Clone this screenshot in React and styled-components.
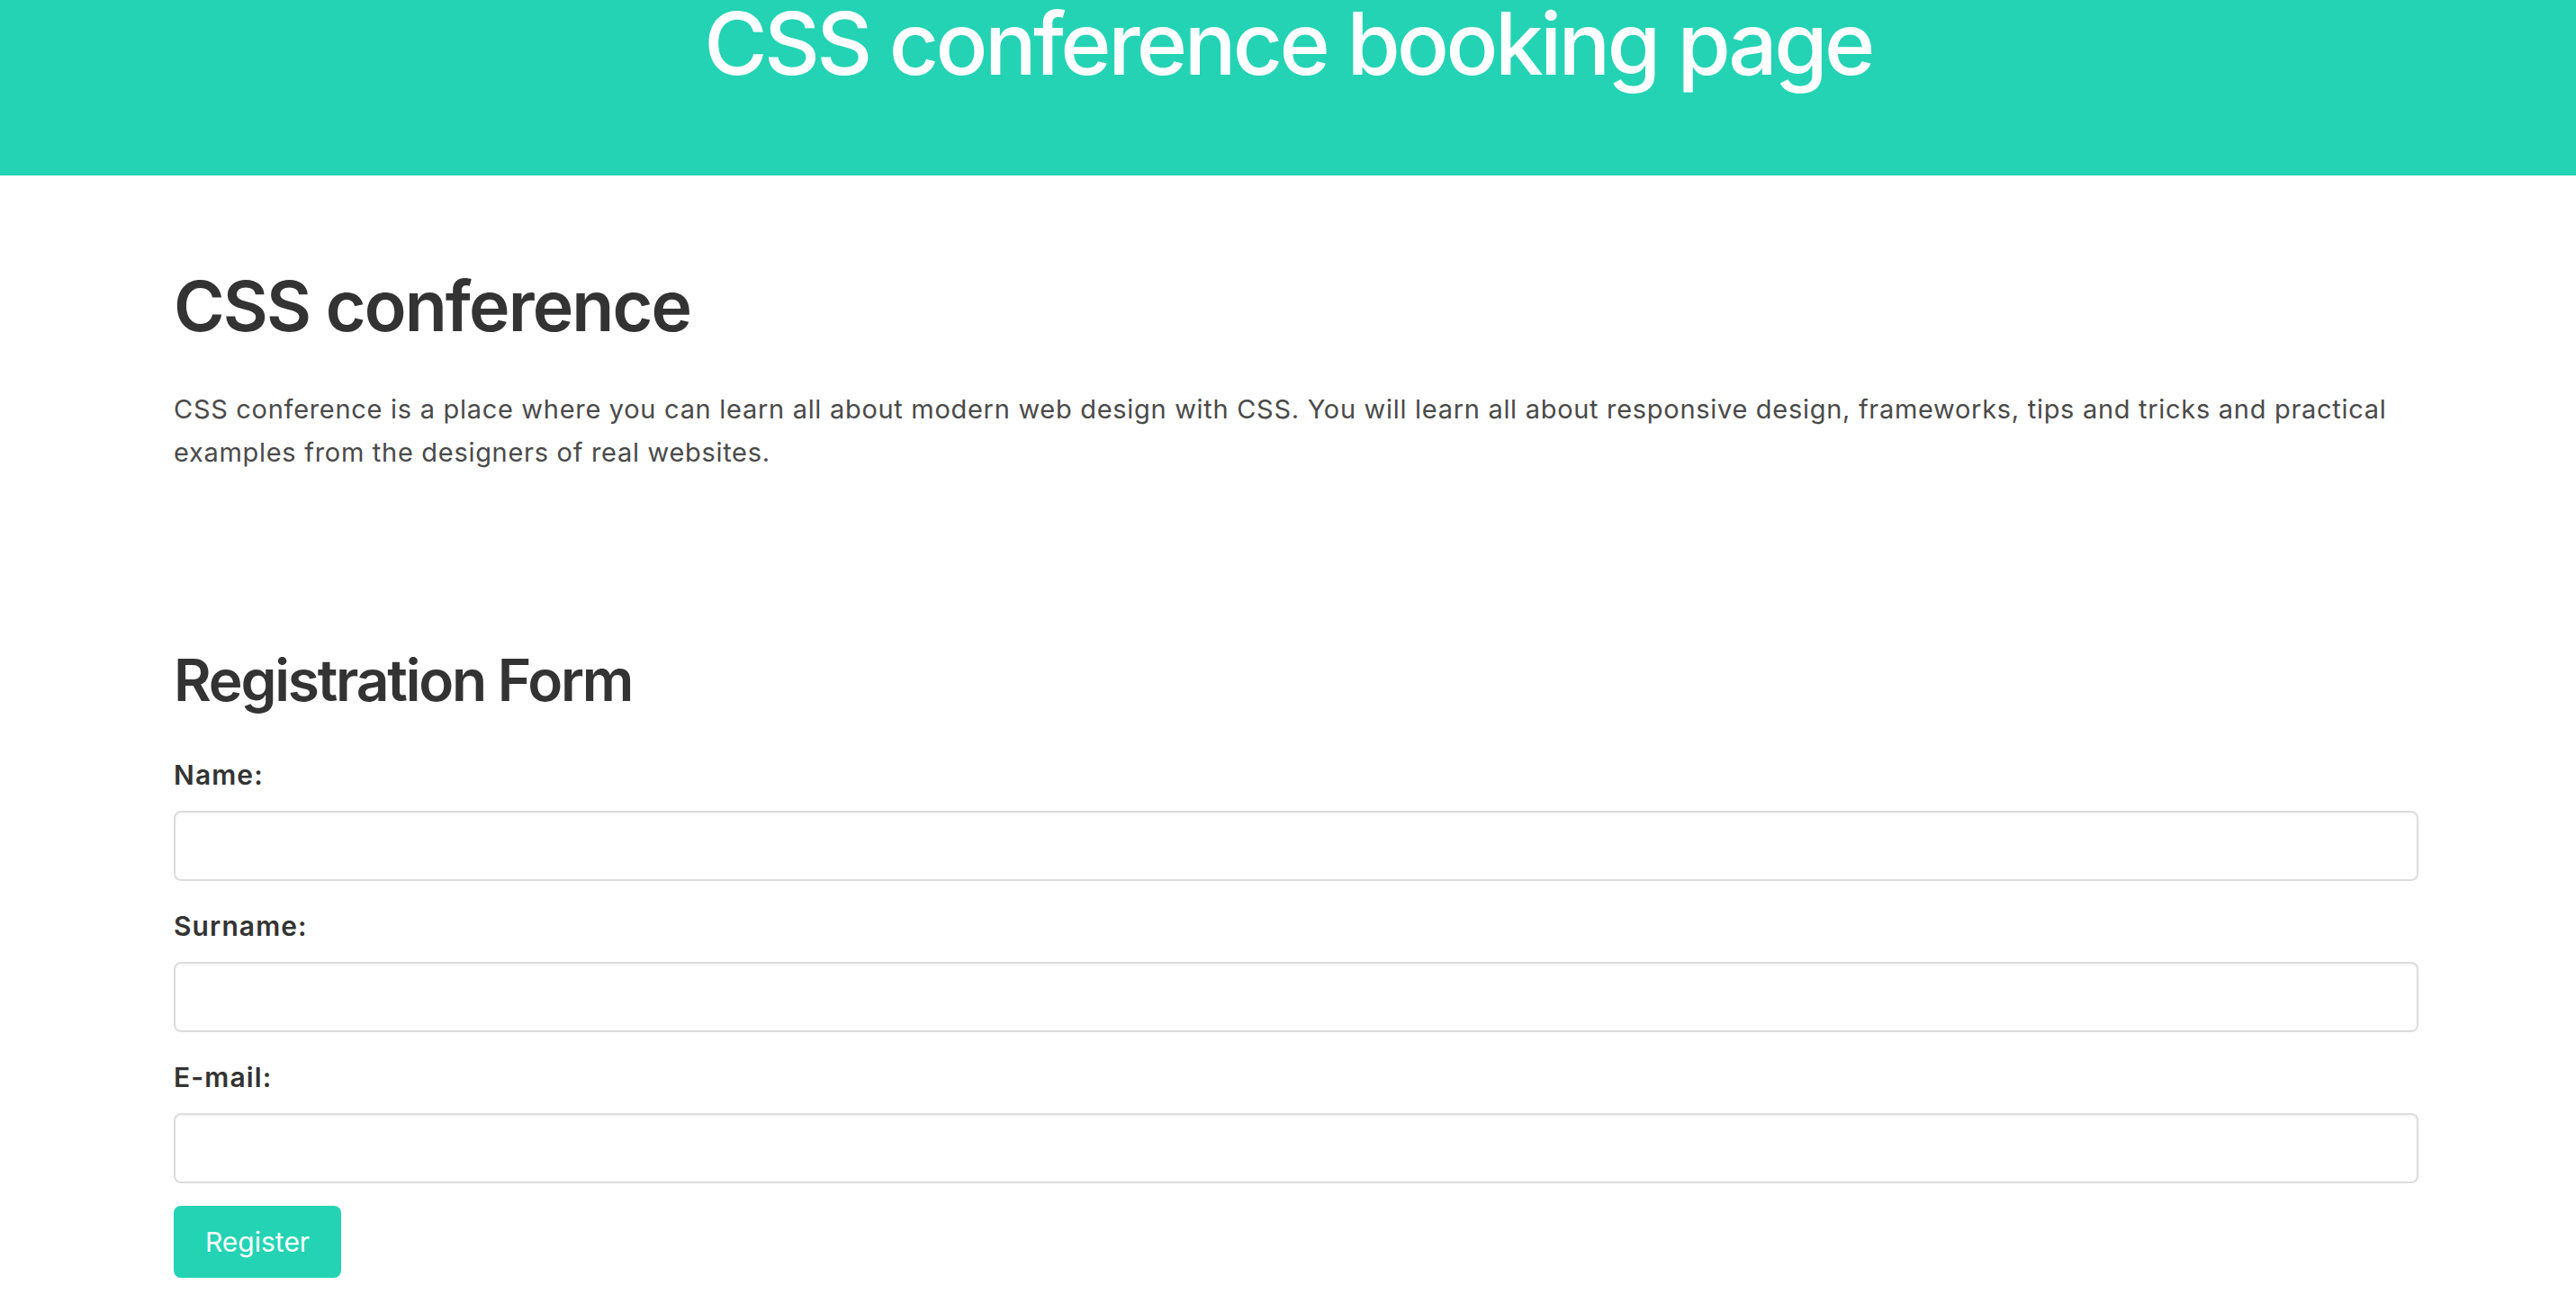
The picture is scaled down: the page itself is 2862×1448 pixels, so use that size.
import React from 'react'
import styled, { createGlobalStyle } from 'styled-components';

const GlobalStyle = createGlobalStyle`
    *{
        margin: 0;
        padding: 0;
    }
    body{
        background: #ffffff;
        font-family: Inter, "Noto Sans", "Liberation Sans", sans-serif;
        color: #333333;
    }
`;

const fields = [
    { id: 'name', label: 'Name:', type: 'text' },
    { id: 'surname', label: 'Surname:', type: 'text' },
    { id: 'email', label: 'E-mail:', type: 'email' },
]

function App() {
  return (
    <PageStyled>
        <GlobalStyle />
        <header className="banner">
            <h1>CSS conference booking page</h1>
        </header>
        <main className="content">
            <section className="intro">
                <h2>CSS conference</h2>
                <p>
                    CSS conference is a place where you can learn all about modern web design with CSS. You will learn all about responsive design, frameworks, tips and tricks and practical examples from the designers of real websites.
                </p>
            </section>
            <FormStyled onSubmit={e => e.preventDefault()}>
                <h3>Registration Form</h3>
                {fields.map(field => {
                    const {id, label, type} = field
                    return <div className="field" key={id}>
                        <label htmlFor={id}>{label}</label>
                        <input id={id} name={id} type={type} />
                    </div>
                })}
                <button type="submit">Register</button>
            </FormStyled>
        </main>
    </PageStyled>
  )
}

export default App

const PageStyled = styled.div`
    .banner{
        height: 195px;
        background: #23d3b4;
        h1{
            font-size: 96px;
            line-height: 96px;
            font-weight: 500;
            letter-spacing: -3.6px;
            color: #ffffff;
            text-align: center;
        }
    }
    .content{
        width: 2476px;
        margin: 0 auto;
    }
    .intro{
        padding-top: 99px;
        h2{
            font-size: 77px;
            line-height: 1.2;
            font-weight: 600;
            letter-spacing: -1.9px;
            color: #333333;
        }
        p{
            margin-top: 45px;
            font-size: 29px;
            line-height: 48px;
            letter-spacing: 0.7px;
            color: #4a4a4a;
        }
    }
`;

const FormStyled = styled.form`
    display: flex;
    flex-direction: column;
    align-items: flex-start;
    padding-top: 191px;
    padding-bottom: 26px;
    h3{
        font-size: 64px;
        line-height: 1.2;
        font-weight: 600;
        letter-spacing: -2.2px;
        color: #333333;
    }
    .field{
        align-self: stretch;
        display: flex;
        flex-direction: column;
        padding-top: 48px;
        &:not(:first-of-type){
            padding-top: 32px;
        }
    }
    label{
        font-size: 30px;
        line-height: 36px;
        font-weight: 600;
        letter-spacing: 1.1px;
        color: #333333;
    }
    input{
        box-sizing: content-box;
        width: 100%;
        height: 74px;
        margin-top: 22px;
        padding: 0 7px;
        border: 2px solid #dcdcdc;
        border-radius: 8px;
        box-shadow: inset 0 2px 3px rgba(0, 0, 0, 0.04);
        font-size: 28px;
        font-family: inherit;
        outline: none;
    }
    button{
        margin-top: 25px;
        height: 80px;
        padding: 0 35px;
        border: none;
        border-radius: 8px;
        background: #23d3b4;
        color: #ffffff;
        font-family: inherit;
        font-size: 30px;
        cursor: pointer;
    }
`;
